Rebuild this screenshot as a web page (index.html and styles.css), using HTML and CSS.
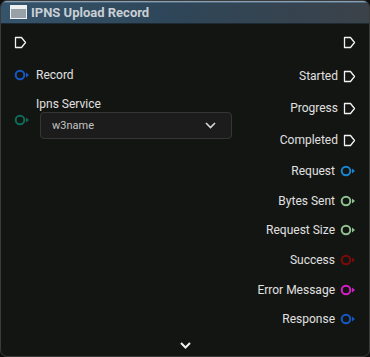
FILE: index.html
```html
<!DOCTYPE html>
<html lang="en">
<head>
    <meta charset="UTF-8">
    <title>IPNS Upload Record</title>
    <link rel="stylesheet" href="styles.css">
</head>
<body>
    <div class="node">
        <div class="header">
            <span class="node-icon"></span>
            <span class="title">IPNS Upload Record</span>
        </div>
        <div class="node-body">
            <div class="col inputs">
                <div class="row exec">
                    <svg class="exec-pin" width="13" height="13" viewBox="0 0 13 13"><path d="M1.5 1.5H7.5L11.5 6.5L7.5 11.5H1.5Z"/></svg>
                </div>
                <div class="row data">
                    <svg class="pin" width="16" height="12" viewBox="0 0 16 12" style="color:#1558c4"><circle cx="6" cy="6" r="4.3"/><path d="M12 3.5L15 6L12 8.5Z"/></svg>
                    <span class="label">Record</span>
                </div>
                <div class="param">
                    <span class="label param-label">Ipns Service</span>
                    <div class="param-field">
                        <svg class="pin" width="16" height="12" viewBox="0 0 16 12" style="color:#0d6b5c"><circle cx="6" cy="6" r="4.3"/><path d="M12 3.5L15 6L12 8.5Z"/></svg>
                        <div class="select">
                            <span>w3name</span>
                            <svg class="chev" width="11" height="7" viewBox="0 0 11 7"><path d="M1 1L5.5 5.5L10 1"/></svg>
                        </div>
                    </div>
                </div>
            </div>
            <div class="col outputs">
                <div class="row exec">
                    <svg class="exec-pin" width="13" height="13" viewBox="0 0 13 13"><path d="M1.5 1.5H7.5L11.5 6.5L7.5 11.5H1.5Z"/></svg>
                </div>
                <div class="row exec">
                    <span class="label">Started</span>
                    <svg class="exec-pin" width="13" height="13" viewBox="0 0 13 13"><path d="M1.5 1.5H7.5L11.5 6.5L7.5 11.5H1.5Z"/></svg>
                </div>
                <div class="row exec">
                    <span class="label">Progress</span>
                    <svg class="exec-pin" width="13" height="13" viewBox="0 0 13 13"><path d="M1.5 1.5H7.5L11.5 6.5L7.5 11.5H1.5Z"/></svg>
                </div>
                <div class="row exec">
                    <span class="label">Completed</span>
                    <svg class="exec-pin" width="13" height="13" viewBox="0 0 13 13"><path d="M1.5 1.5H7.5L11.5 6.5L7.5 11.5H1.5Z"/></svg>
                </div>
                <div class="row data">
                    <span class="label">Request</span>
                    <svg class="pin" width="16" height="12" viewBox="0 0 16 12" style="color:#1784d0"><circle cx="6" cy="6" r="4.3"/><path d="M12 3.5L15 6L12 8.5Z"/></svg>
                </div>
                <div class="row data">
                    <span class="label">Bytes Sent</span>
                    <svg class="pin" width="16" height="12" viewBox="0 0 16 12" style="color:#8fc08f"><circle cx="6" cy="6" r="4.3"/><path d="M12 3.5L15 6L12 8.5Z"/></svg>
                </div>
                <div class="row data">
                    <span class="label">Request Size</span>
                    <svg class="pin" width="16" height="12" viewBox="0 0 16 12" style="color:#8fc08f"><circle cx="6" cy="6" r="4.3"/><path d="M12 3.5L15 6L12 8.5Z"/></svg>
                </div>
                <div class="row data">
                    <span class="label">Success</span>
                    <svg class="pin" width="16" height="12" viewBox="0 0 16 12" style="color:#7d0a0a"><circle cx="6" cy="6" r="4.3"/><path d="M12 3.5L15 6L12 8.5Z"/></svg>
                </div>
                <div class="row data">
                    <span class="label">Error Message</span>
                    <svg class="pin" width="16" height="12" viewBox="0 0 16 12" style="color:#d61ec8"><circle cx="6" cy="6" r="4.3"/><path d="M12 3.5L15 6L12 8.5Z"/></svg>
                </div>
                <div class="row data">
                    <span class="label">Response</span>
                    <svg class="pin" width="16" height="12" viewBox="0 0 16 12" style="color:#1558c4"><circle cx="6" cy="6" r="4.3"/><path d="M12 3.5L15 6L12 8.5Z"/></svg>
                </div>
            </div>
        </div>
        <div class="footer">
            <svg class="more" width="11" height="7" viewBox="0 0 11 7"><path d="M1 1L5.5 5.5L10 1"/></svg>
        </div>
    </div>
</body>
</html>
```

FILE: styles.css
```css
html {
    background: #0e0f0e;
}
body {
    margin: 0;
    font-family: Roboto, 'Liberation Sans', sans-serif;
    color: #e0e0e0;
}
.node {
    box-sizing: border-box;
    width: 370px;
    height: 357px;
    border: 1px solid #3a3c3b;
    border-radius: 7px;
    background: #131513;
    overflow: hidden;
    display: flex;
    flex-direction: column;
}
.header {
    height: 23px;
    display: flex;
    align-items: center;
    padding-left: 9px;
    gap: 4px;
    background: linear-gradient(to right, #35546b 0%, #2e4659 45%, #3b4249 100%);
    box-shadow: inset 0 1px 0 #8aa0b2, inset 0 2px 0 #4f6a80, inset 0 -1px 0 #1d2a33;
}
.node-icon {
    box-sizing: border-box;
    width: 17px;
    height: 14px;
    border: 1px solid #eef0f2;
    border-top-width: 4px;
    background: #98a0a8;
}
.title {
    font-weight: bold;
    font-size: 13px;
    color: #c9cfd4;
}
.node-body {
    flex: 1;
    display: flex;
    justify-content: space-between;
    padding: 3px 13px 0 13px;
}
.col {
    display: flex;
    flex-direction: column;
}
.outputs {
    align-items: flex-end;
}
.row {
    display: flex;
    align-items: center;
    gap: 5px;
    font-size: 12px;
}
.row.exec {
    height: 32px;
}
.row.data {
    height: 29.7px;
}
.inputs .row.data {
    gap: 6px;
    margin-top: 1px;
}
.outputs .row.exec:nth-child(2) {
    margin-top: 1.5px;
}
.exec-pin {
    fill: none;
    stroke: #f2f2f2;
    stroke-width: 1.3;
    stroke-linejoin: round;
}
.pin circle {
    fill: none;
    stroke: currentColor;
    stroke-width: 2;
}
.pin path {
    fill: currentColor;
}
.param {
    display: flex;
    flex-direction: column;
    padding-top: 8px;
}
.param-label {
    font-size: 12px;
    padding-left: 22px;
    line-height: 14px;
}
.param-field {
    display: flex;
    align-items: flex-start;
    gap: 10px;
    margin-top: 1px;
}
.param-field .pin {
    margin-top: 2px;
}
.select {
    box-sizing: border-box;
    width: 192px;
    height: 27px;
    border: 1px solid #353535;
    border-radius: 4px;
    background: #1c1c1c;
    display: flex;
    align-items: center;
    justify-content: space-between;
    padding: 0 15px 0 11px;
    font-size: 11px;
    color: #c4c4c4;
}
.chev, .more {
    fill: none;
    stroke: #d8d8d8;
    stroke-width: 1.6;
}
.footer {
    height: 22px;
    display: flex;
    justify-content: center;
    align-items: center;
}
.more {
    stroke: #f0f0f0;
    stroke-width: 2;
}
```
